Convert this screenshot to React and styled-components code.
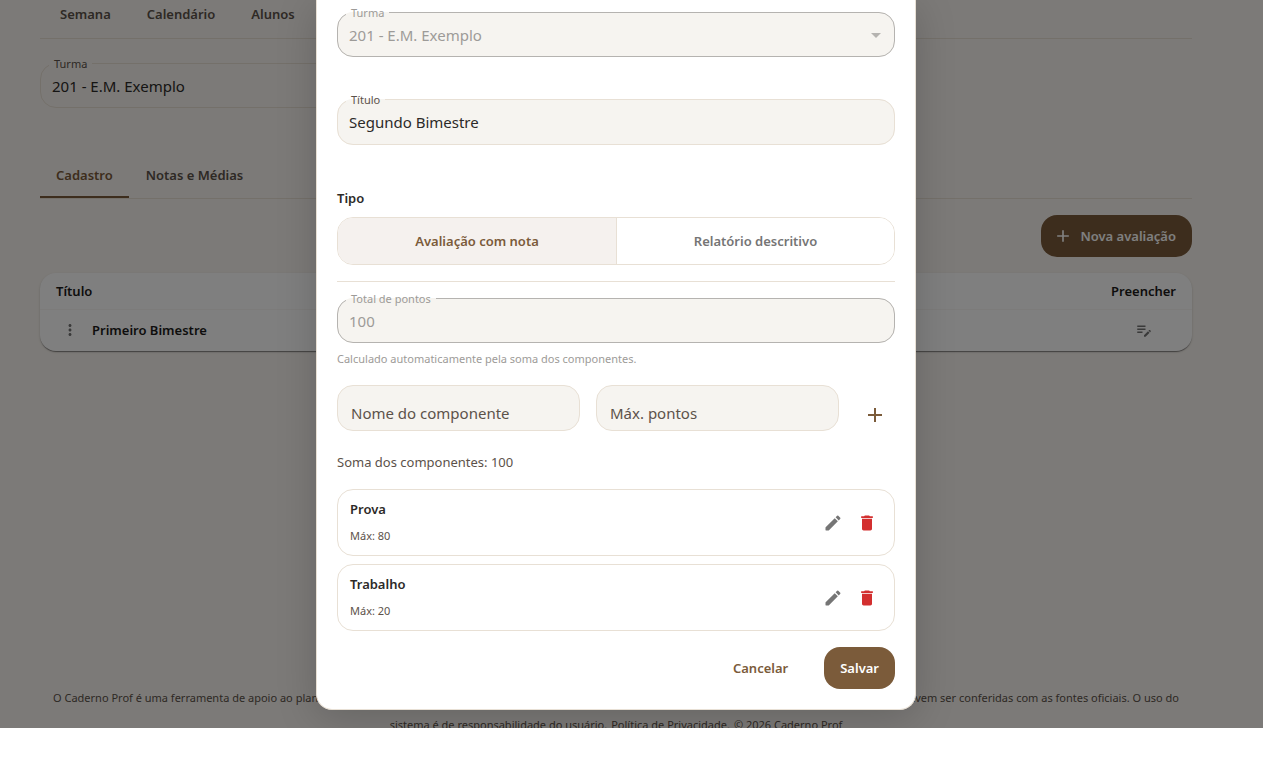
import React, { useState } from "react";
import styled, { createGlobalStyle } from "styled-components";

const GlobalStyle = createGlobalStyle`
  * { box-sizing: border-box; }
  body {
    margin: 0;
    background: #fff;
    color: #2c2a28;
    font-family: "Segoe UI", "Noto Sans", "Open Sans", sans-serif;
    font-size: 13px;
    line-height: 20px;
    overflow: hidden;
  }
  button, input, select { font: inherit; color: inherit; }
`;

const Screen = styled.div`
  position: relative;
  height: calc(100vh - 50px);
  overflow: hidden;
  background: #f9f5f0;
`;

const Page = styled.div`
  display: flex;
  flex-direction: column;
  height: 100%;
  padding: 0 71px 0 40px;
`;

const Nav = styled.nav`
  display: flex;
  gap: 36px;
  padding: 4px 20px 14px;
  border-bottom: 1px solid #e8e0d5;
`;

const NavLink = styled.a`
  color: #5c524a;
  font-weight: 600;
  text-decoration: none;
`;

const FieldBox = styled.fieldset`
  position: relative;
  display: block;
  min-width: 0;
  margin: 0;
  padding: 0 0 ${(p) => (p.$tall ? 9 : 8)}px;
  border: 1px solid ${(p) => (p.$disabled ? "#b5b3b0" : "#e8e0d5")};
  border-radius: 16px;
  background: ${(p) => (p.$plain ? "transparent" : "#f6f4f0")};
  color: ${(p) => (p.$disabled ? "#9d9b98" : "#2c2a28")};

  legend {
    margin-left: 8px;
    padding: 0 5px;
    font-size: 11px;
    line-height: 19px;
    color: ${(p) => (p.$disabled ? "#9d9b98" : "#5c524a")};
  }
  input, select {
    display: block;
    width: 100%;
    height: 26px;
    padding: 0 11px;
    border: 0;
    outline: 0;
    appearance: none;
    background: transparent;
    font-size: 15px;
    opacity: 1;
  }
  svg {
    position: absolute;
    right: 6px;
    bottom: 9px;
    color: #b5b3b0;
    pointer-events: none;
  }
`;

const ClassField = styled.div`
  max-width: 560px;
  margin-top: 15px;
`;

const Tabs = styled.div`
  display: flex;
  gap: 1px;
  margin-top: 44px;
  border-bottom: 1px solid #e8e0d5;
`;

const Tab = styled.button`
  padding: 13px 16px 11px;
  border: 0;
  border-bottom: 2px solid ${(p) => (p.$active ? "#7b5b3a" : "transparent")};
  background: none;
  color: ${(p) => (p.$active ? "#7b5b3a" : "#5c524a")};
  font-weight: 600;
`;

const Toolbar = styled.div`
  display: flex;
  justify-content: flex-end;
  margin: 16px 0;
`;

const Button = styled.button`
  display: inline-flex;
  align-items: center;
  gap: 7px;
  height: 42px;
  padding: 0 16px 0 ${(p) => (p.$icon ? 12 : 16)}px;
  border: 0;
  border-radius: 16px;
  background: ${(p) => (p.$text ? "transparent" : "#7b5b3a")};
  color: ${(p) => (p.$text ? "#7b5b3a" : "#fff")};
  font-weight: 600;
`;

const TableCard = styled.div`
  border-radius: 16px;
  background: #fff;
  box-shadow: 0 2px 1px -1px rgba(0, 0, 0, 0.3), 0 1px 1px rgba(0, 0, 0, 0.16), 0 1px 3px rgba(0, 0, 0, 0.12);
`;

const Table = styled.table`
  width: 100%;
  border-collapse: collapse;

  th, td {
    padding: 8px 16px;
    text-align: left;
    font-weight: 600;
    color: #1c1b1a;
  }
  thead th { border-bottom: 1px solid #f9f7f4; }
  tbody td { padding: 5px 16px 6px; }
  th:last-child { text-align: right; }
  td:last-child { padding-right: 33px; text-align: right; }
`;

const RowTitle = styled.div`
  display: flex;
  align-items: center;
  gap: 8px;
`;

const IconButton = styled.button`
  display: inline-grid;
  place-items: center;
  flex: none;
  width: ${(p) => p.$width || 30}px;
  height: ${(p) => p.$height || 30}px;
  padding: 0;
  border: 0;
  background: none;
  color: ${(p) => p.$color || "#757575"};
`;

const Footer = styled.footer`
  margin-top: auto;
  margin-bottom: -10px;
  padding: 0 13px;
  font-size: 11px;
  line-height: 26px;
  color: #5c524a;
`;

const FooterLine = styled.div`
  display: flex;
  justify-content: ${(p) => (p.$spread ? "space-between" : "center")};
  gap: 4px;
  white-space: nowrap;

  & + & { padding-top: 1px; }
  a { color: inherit; text-decoration: none; }
`;

const Backdrop = styled.div`
  position: absolute;
  inset: 0;
  display: flex;
  justify-content: center;
  align-items: flex-start;
  padding-right: 31px;
  background: rgba(0, 0, 0, 0.5);
`;

const Dialog = styled.form`
  display: flex;
  flex-direction: column;
  width: 100%;
  max-width: 600px;
  padding: 3px 20px 20px;
  border: 1px solid #e8e0d5;
  border-top: 0;
  border-radius: 0 0 16px 16px;
  background: #fff;
  box-shadow: 0 8px 40px rgba(0, 0, 0, 0.18);
`;

const TitleField = styled.div`
  margin: 33px 0 43px;
`;

const SectionLabel = styled.div`
  font-weight: 600;
`;

const Toggle = styled.div`
  display: grid;
  grid-template-columns: 1fr 1fr;
  height: 48px;
  margin: 9px 0 16px;
  border: 1px solid #e8e0d5;
  border-radius: 16px;
  overflow: hidden;
`;

const ToggleOption = styled.button`
  border: 0;
  background: ${(p) => (p.$active ? "#f5f1ee" : "#fff")};
  color: ${(p) => (p.$active ? "#7b5b3a" : "#757575")};
  font-weight: 600;

  & + & { border-left: 1px solid #e8e0d5; }
`;

const Divider = styled.hr`
  width: 100%;
  margin: 0 0 7px;
  border: 0;
  border-top: 1px solid #e8e0d5;
`;

const Helper = styled.p`
  margin: 6px 0 16px;
  font-size: 11px;
  color: #9d9b98;
`;

const ComponentForm = styled.div`
  display: grid;
  grid-template-columns: 1fr 1fr 40px;
  align-items: end;
  gap: 16px;
`;

const ComponentInput = styled.input`
  min-width: 0;
  height: 46px;
  padding: 10px 13px 0;
  border: 1px solid #e8e0d5;
  border-radius: 16px;
  outline: 0;
  background: #f6f4f0;
  font-size: 15px;

  &::placeholder { color: #5c524a; opacity: 1; }
`;

const Sum = styled.p`
  margin: 21px 0 17px;
  color: #5c524a;
`;

const List = styled.ul`
  display: flex;
  flex-direction: column;
  gap: 8px;
  margin: 0 0 16px;
  padding: 0;
  list-style: none;
`;

const Item = styled.li`
  display: flex;
  align-items: center;
  gap: 4px;
  padding: 9px 12px;
  border: 1px solid #e8e0d5;
  border-radius: 16px;
`;

const ItemText = styled.div`
  display: flex;
  flex: 1;
  flex-direction: column;
  gap: 7px;

  small { font-size: 11px; color: #5c524a; }
`;

const Actions = styled.div`
  display: flex;
  justify-content: flex-end;
  gap: 20px;
`;

const paths = {
  add: "M19 13h-6v6h-2v-6H5v-2h6V5h2v6h6z",
  more: "M12 8c1.1 0 2-.9 2-2s-.9-2-2-2-2 .9-2 2 .9 2 2 2m0 2c-1.1 0-2 .9-2 2s.9 2 2 2 2-.9 2-2-.9-2-2-2m0 6c-1.1 0-2 .9-2 2s.9 2 2 2 2-.9 2-2-.9-2-2-2",
  note: "M3 10h11v2H3zm0-2h11V6H3zm0 8h7v-2H3zm15.01-3.13.71-.71c.39-.39 1.02-.39 1.41 0l.71.71c.39.39.39 1.02 0 1.41l-.71.71zm-.71.71-5.3 5.3V21h2.12l5.3-5.3z",
  edit: "M3 17.46v3.04c0 .28.22.5.5.5h3.04c.13 0 .26-.05.35-.15L17.81 9.94l-3.75-3.75L3.15 17.1q-.15.15-.15.36M20.71 7.04c.39-.39.39-1.02 0-1.41l-2.34-2.34a.996.996 0 0 0-1.41 0l-1.83 1.83 3.75 3.75z",
  trash: "M6 19c0 1.1.9 2 2 2h8c1.1 0 2-.9 2-2V7H6zM19 4h-3.5l-1-1h-5l-1 1H5v2h14z",
  arrow: "m7 10 5 5 5-5z",
};

function Icon({ name, size = 20 }) {
  return (
    <svg width={size} height={size} viewBox="0 0 24 24" fill="currentColor" aria-hidden="true">
      <path d={paths[name]} />
    </svg>
  );
}

function Field({ id, label, disabled, plain, tall, children }) {
  return (
    <FieldBox $disabled={disabled} $plain={plain} $tall={tall}>
      <legend>
        <label htmlFor={id}>{label}</label>
      </legend>
      {children}
    </FieldBox>
  );
}

const components = [
  { name: "Prova", max: 80 },
  { name: "Trabalho", max: 20 },
];

export default function App() {
  const [type, setType] = useState("nota");

  return (
    <>
      <GlobalStyle />
      <Screen>
        <Page>
          <Nav>
            <NavLink href="#semana">Semana</NavLink>
            <NavLink href="#calendario">Calendário</NavLink>
            <NavLink href="#alunos">Alunos</NavLink>
          </Nav>
          <ClassField>
            <Field id="page-class" label="Turma" plain>
              <select id="page-class">
                <option>201 - E.M. Exemplo</option>
              </select>
            </Field>
          </ClassField>
          <Tabs role="tablist">
            <Tab type="button" role="tab" aria-selected="true" $active>Cadastro</Tab>
            <Tab type="button" role="tab" aria-selected="false">Notas e Médias</Tab>
          </Tabs>
          <Toolbar>
            <Button type="button" $icon>
              <Icon name="add" />
              Nova avaliação
            </Button>
          </Toolbar>
          <TableCard>
            <Table>
              <thead>
                <tr>
                  <th scope="col">Título</th>
                  <th scope="col">Preencher</th>
                </tr>
              </thead>
              <tbody>
                <tr>
                  <td>
                    <RowTitle>
                      <IconButton type="button" aria-label="Opções" $width={28}>
                        <Icon name="more" size={18} />
                      </IconButton>
                      Primeiro Bimestre
                    </RowTitle>
                  </td>
                  <td>
                    <IconButton type="button" aria-label="Preencher">
                      <Icon name="note" size={18} />
                    </IconButton>
                  </td>
                </tr>
              </tbody>
            </Table>
          </TableCard>
          <Footer>
            <FooterLine $spread>
              <span>O Caderno Prof é uma ferramenta de apoio ao planejamento</span>
              <span>devem ser conferidas com as fontes oficiais. O uso do</span>
            </FooterLine>
            <FooterLine>
              <span>sistema é de responsabilidade do usuário.</span>
              <a href="#privacidade">Política de Privacidade.</a>
              <span>© 2026 Caderno Prof</span>
            </FooterLine>
          </Footer>
        </Page>
        <Backdrop>
          <Dialog role="dialog" aria-modal="true" onSubmit={(e) => e.preventDefault()}>
            <Field id="class" label="Turma" disabled>
              <select id="class" disabled>
                <option>201 - E.M. Exemplo</option>
              </select>
              <Icon name="arrow" size={24} />
            </Field>
            <TitleField>
              <Field id="title" label="Título" tall>
                <input id="title" type="text" defaultValue="Segundo Bimestre" />
              </Field>
            </TitleField>
            <SectionLabel id="type-label">Tipo</SectionLabel>
            <Toggle role="group" aria-labelledby="type-label">
              <ToggleOption
                type="button"
                aria-pressed={type === "nota"}
                $active={type === "nota"}
                onClick={() => setType("nota")}
              >
                Avaliação com nota
              </ToggleOption>
              <ToggleOption
                type="button"
                aria-pressed={type === "relatorio"}
                $active={type === "relatorio"}
                onClick={() => setType("relatorio")}
              >
                Relatório descritivo
              </ToggleOption>
            </Toggle>
            <Divider />
            <Field id="total" label="Total de pontos" disabled>
              <input id="total" type="text" value="100" disabled readOnly />
            </Field>
            <Helper>Calculado automaticamente pela soma dos componentes.</Helper>
            <ComponentForm>
              <ComponentInput type="text" aria-label="Nome do componente" placeholder="Nome do componente" />
              <ComponentInput type="text" aria-label="Máx. pontos" placeholder="Máx. pontos" />
              <IconButton type="button" aria-label="Adicionar" $width={40} $height={32} $color="#7b5b3a">
                <Icon name="add" size={24} />
              </IconButton>
            </ComponentForm>
            <Sum>Soma dos componentes: 100</Sum>
            <List>
              {components.map((c) => (
                <Item key={c.name}>
                  <ItemText>
                    <SectionLabel>{c.name}</SectionLabel>
                    <small>Máx: {c.max}</small>
                  </ItemText>
                  <IconButton type="button" aria-label={`Editar ${c.name}`}>
                    <Icon name="edit" />
                  </IconButton>
                  <IconButton type="button" aria-label={`Excluir ${c.name}`} $color="#d32f2f">
                    <Icon name="trash" />
                  </IconButton>
                </Item>
              ))}
            </List>
            <Actions>
              <Button type="button" $text>Cancelar</Button>
              <Button type="submit">Salvar</Button>
            </Actions>
          </Dialog>
        </Backdrop>
      </Screen>
    </>
  );
}
